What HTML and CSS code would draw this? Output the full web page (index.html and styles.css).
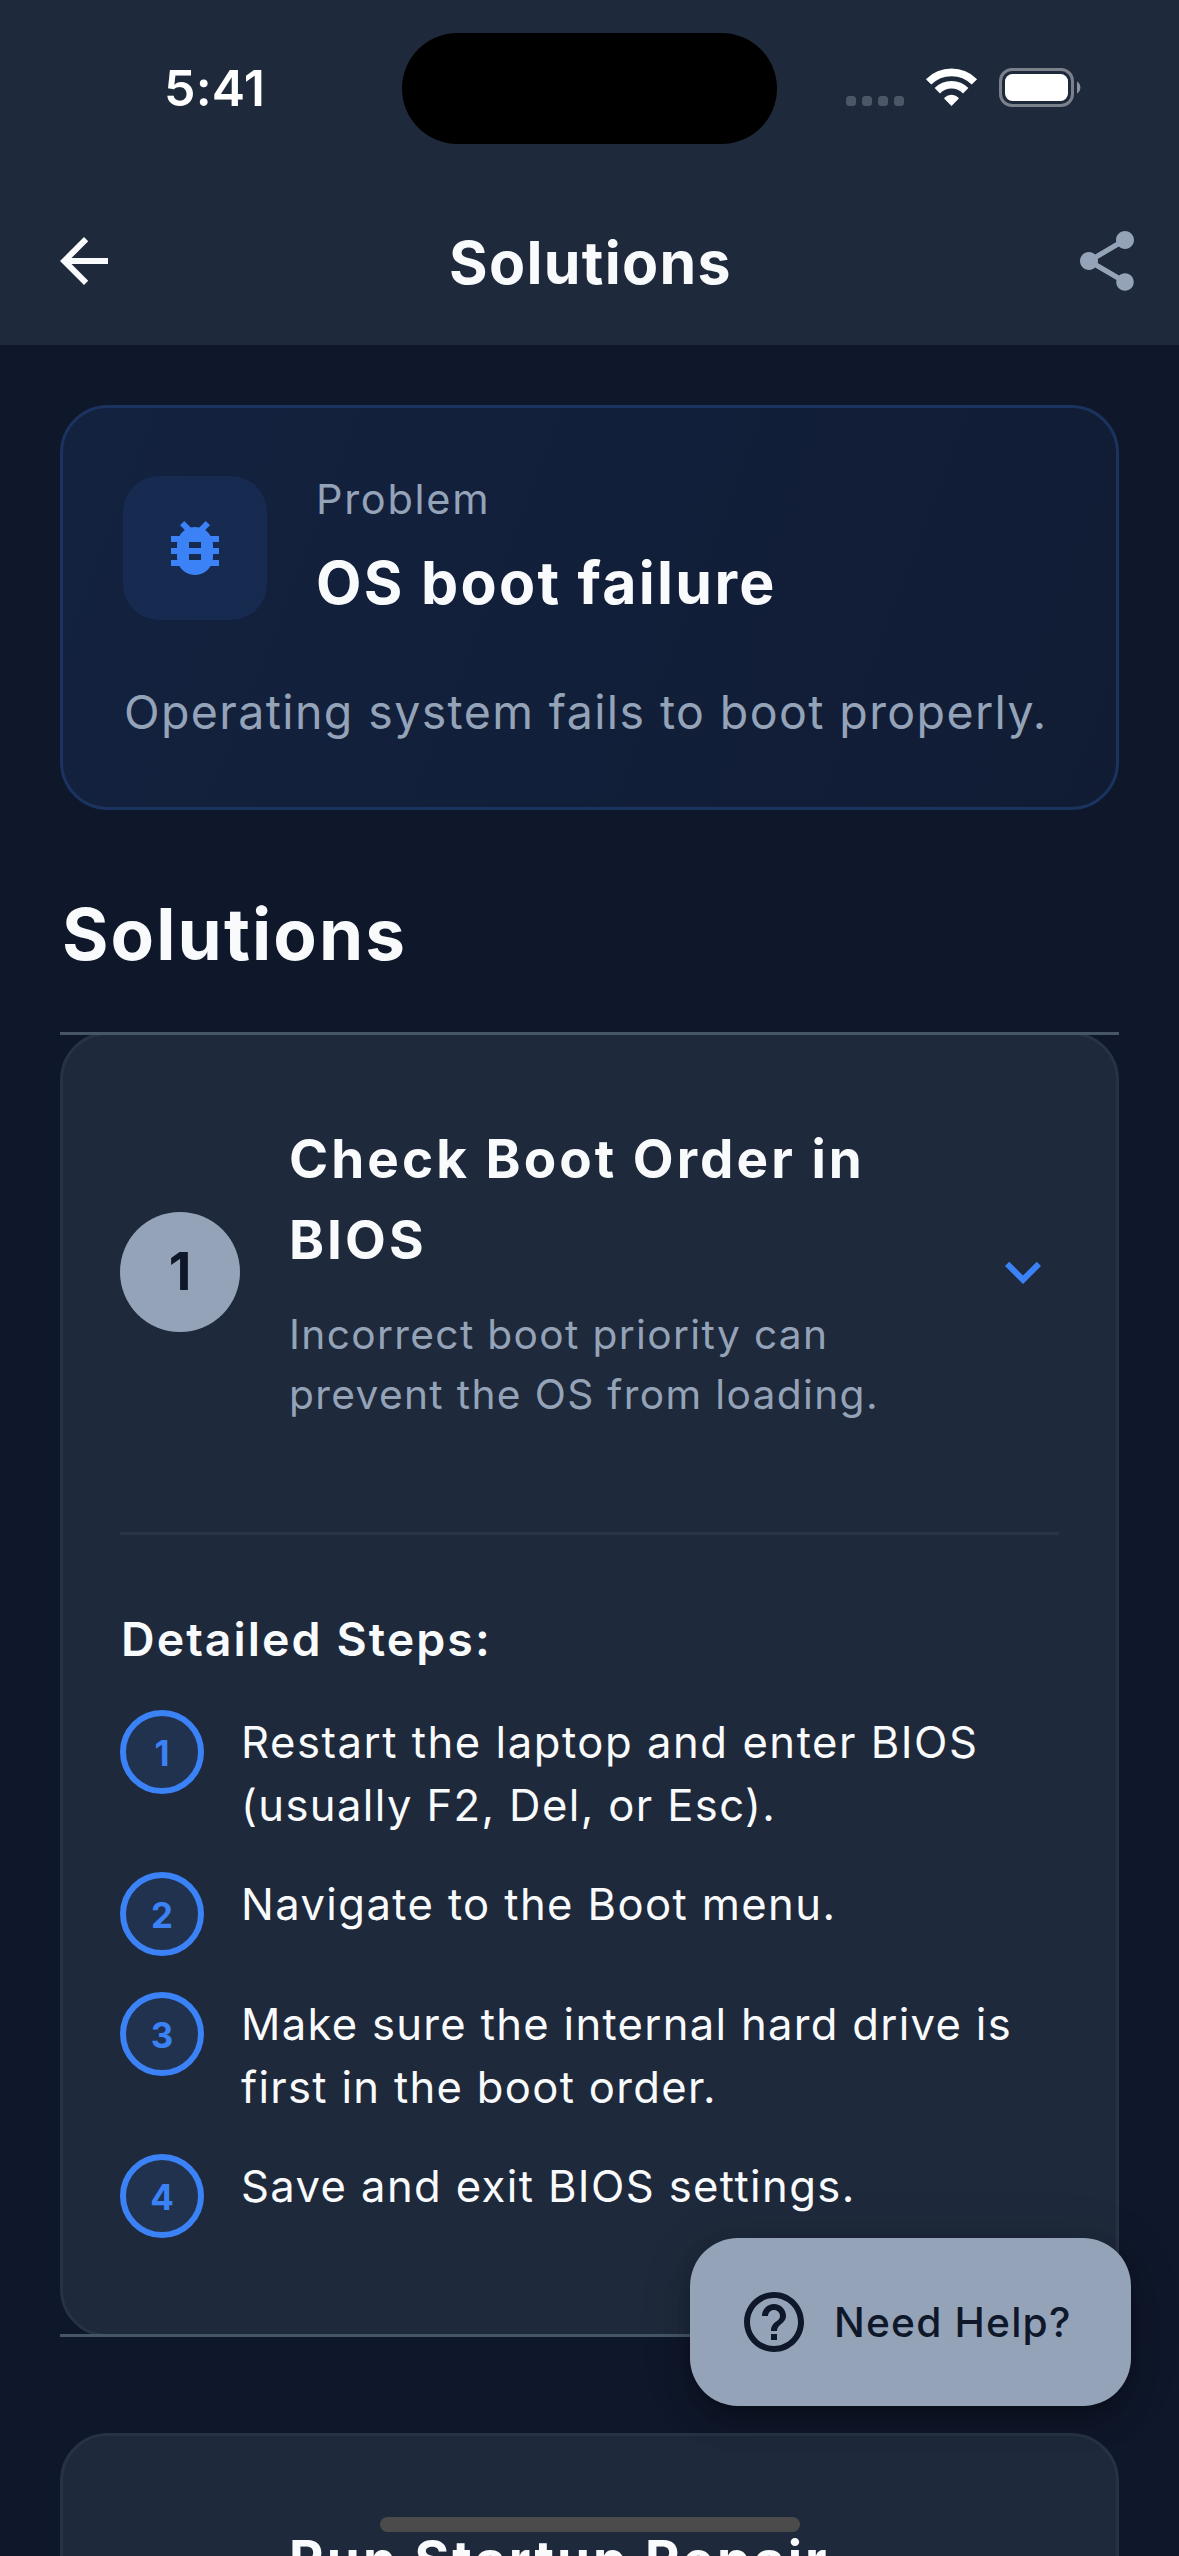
FILE: index.html
```html
<!DOCTYPE html>
<html lang="en">
<head>
<meta charset="utf-8">
<title>Solutions</title>
<link rel="stylesheet" href="styles.css">
</head>
<body>
<div class="screen">
  <header class="top">
    <div class="status">
      <span class="time">5:41</span>
      <span class="island"></span>
      <svg class="signals" width="235" height="39" viewBox="0 0 235 39">
        <g fill="#4c5666">
          <rect x="0" y="28" width="10" height="10" rx="3.5"/>
          <rect x="16" y="28" width="10" height="10" rx="3.5"/>
          <rect x="32" y="28" width="10" height="10" rx="3.5"/>
          <rect x="48" y="28" width="10" height="10" rx="3.5"/>
        </g>
        <g fill="none" stroke="#fff" stroke-width="7.6">
          <path d="M82.6 13.9A32.4 32.4 0 0 1 128.4 13.9"/>
          <path d="M91.3 22.7A20 20 0 0 1 119.7 22.7"/>
        </g>
        <path fill="#fff" d="M105.5 38 98.6 31.1Q97.8 30.3 98.7 29.4A9.8 9.8 0 0 1 112.3 29.4Q113.2 30.3 112.4 31.1Z"/>
        <rect x="154.500" y="1.500" width="72" height="36" rx="11.500" fill="none" stroke="#7a818b" stroke-width="3"/>
        <rect x="159" y="6" width="63" height="27" rx="7.500" fill="#fff"/>
        <path fill="#8e949d" d="M231 13.500A7 7 0 0 1 231 25.500Z"/>
      </svg>
    </div>
    <div class="appbar">
      <svg class="icon back" viewBox="0 0 24 24"><path d="M20 11H7.830l5.590-5.590L12 4l-8 8 8 8 1.410-1.410L7.830 13H20v-2z"/></svg>
      <h1 class="title">Solutions</h1>
      <svg class="icon share" viewBox="0 0 24 24"><path d="M18 16.080c-.76 0-1.440.3-1.960.77L8.910 12.700c.05-.23.09-.46.09-.7s-.04-.47-.09-.7l7.050-4.110c.54.5 1.250.81 2.040.81 1.660 0 3-1.340 3-3s-1.340-3-3-3-3 1.340-3 3c0 .24.04.47.09.7L8.040 9.810C7.500 9.310 6.790 9 6 9c-1.660 0-3 1.340-3 3s1.340 3 3 3c.79 0 1.500-.31 2.040-.81l7.120 4.160c-.05.21-.08.43-.08.65 0 1.610 1.310 2.920 2.920 2.920s2.920-1.310 2.920-2.920-1.310-2.920-2.920-2.920z"/></svg>
    </div>
  </header>

  <main class="content">
    <section class="problem">
      <div class="problem-row">
        <span class="bug-box">
          <svg class="icon" viewBox="0 0 24 24"><path d="M20 8h-2.810c-.45-.78-1.070-1.450-1.820-1.960L17 4.410 15.590 3l-2.170 2.170C12.960 5.060 12.490 5 12 5s-.96.06-1.410.17L8.410 3 7 4.410l1.620 1.630C7.880 6.550 7.260 7.220 6.810 8H4v2h2.090c-.05.33-.09.66-.09 1v1H4v2h2v1c0 .34.04.67.09 1H4v2h2.810c1.040 1.790 2.970 3 5.190 3s4.150-1.210 5.190-3H20v-2h-2.090c.05-.33.09-.66.09-1v-1h2v-2h-2v-1c0-.34-.04-.67-.09-1H20V8zm-6 8h-4v-2h4v2zm0-4h-4v-2h4v2z"/></svg>
        </span>
        <div>
          <p class="problem-label">Problem</p>
          <h2 class="problem-name">OS boot failure</h2>
        </div>
      </div>
      <p class="problem-desc">Operating system fails to boot properly.</p>
    </section>

    <h2 class="section-title">Solutions</h2>

    <article class="card card-open">
      <div class="card-head">
        <span class="badge">1</span>
        <div class="card-text">
          <h3 class="card-title">Check Boot Order in<br>BIOS</h3>
          <p class="card-sub">Incorrect boot priority can<br>prevent the OS from loading.</p>
        </div>
        <svg class="icon chevron" viewBox="0 0 24 24"><path d="M7.410 8.590 12 13.170l4.590-4.580L18 10l-6 6-6-6z"/></svg>
      </div>
      <hr class="divider">
      <h4 class="steps-title">Detailed Steps:</h4>
      <ol class="steps">
        <li class="step"><span class="num">1</span><p><span class="wide">Restart the laptop and enter BIOS</span><br>(usually F2, Del, or Esc).</p></li>
        <li class="step"><span class="num">2</span><p>Navigate to the Boot menu.</p></li>
        <li class="step"><span class="num">3</span><p>Make sure the internal hard drive is<br>first in the boot order.</p></li>
        <li class="step"><span class="num">4</span><p>Save and exit BIOS settings.</p></li>
      </ol>
    </article>

    <article class="card card-next">
      <div class="card-text">
        <h3 class="card-title">Run Startup Repair</h3>
      </div>
    </article>
  </main>

  <button class="help" type="button">
    <svg class="icon" viewBox="0 0 24 24"><path d="M11 18h2v-2h-2v2zm1-16C6.480 2 2 6.480 2 12s4.480 10 10 10 10-4.480 10-10S17.520 2 12 2zm0 18c-4.410 0-8-3.590-8-8s3.590-8 8-8 8 3.590 8 8-3.590 8-8 8zm0-14c-2.210 0-4 1.790-4 4h2c0-1.100.9-2 2-2s2 .9 2 2c0 2-3 1.750-3 5h2c0-2.250 3-2.500 3-5 0-2.210-1.790-4-4-4z"/></svg>
    <span>Need Help?</span>
  </button>
  <span class="home-bar"></span>
</div>
</body>
</html>
```
FILE: styles.css
```css
* { box-sizing: border-box; margin: 0; padding: 0; }

body {
  background: #0f172a;
  color: #f8fafc;
  font-family: Inter, "Liberation Sans", sans-serif;
}

.screen {
  position: relative;
  width: 1179px;
  height: 2556px;
  overflow: hidden;
}

.icon {
  width: 72px;
  height: 72px;
  flex: none;
  fill: currentColor;
}

/* Status bar and app bar */
.top { height: 345px; background: #1e293b; }

.status {
  display: grid;
  grid-template-columns: 402px 375px 402px;
  align-items: center;
  height: 177px;
}
.time {
  padding-left: 164px;
  margin-bottom: 1px;
  color: #fff;
  font-size: 50px;
  font-weight: 600;
  line-height: 60px;
  letter-spacing: 0.2px;
}
.island { height: 111px; border-radius: 56px; background: #000; }
.signals { justify-self: end; margin: 0 98px 2px 0; }

.appbar {
  display: grid;
  grid-template-columns: 1fr auto 1fr;
  align-items: center;
  height: 168px;
  padding: 0 36px 0 48px;
}
.title {
  padding: 3px 0 0;
  margin-left: -10px;
  font-size: 59px;
  font-weight: 660;
  line-height: 72px;
  letter-spacing: 1.3px;
}
.share { justify-self: end; color: #94a3b8; }

.content { padding: 60px 60px 0; }

/* Problem summary */
.problem {
  height: 405px;
  padding: 60px;
  border: 3px solid #1b335f;
  border-radius: 48px;
  background: linear-gradient(111deg, #13223f, #111c34) border-box;
}
.problem-row {
  display: flex;
  align-items: center;
  gap: 49px;
  height: 159px;
}
.bug-box {
  display: flex;
  align-items: center;
  justify-content: center;
  width: 144px;
  height: 144px;
  border-radius: 36px;
  background: rgba(59, 130, 246, 0.1);
  color: #3b82f6;
}
.problem-label {
  color: #94a3b8;
  font-size: 41.5px;
  line-height: 60px;
  letter-spacing: 1.7px;
}
.problem-name {
  margin-top: 9px;
  font-size: 59px;
  font-weight: 660;
  line-height: 89px;
  letter-spacing: 2.3px;
}
.problem-desc {
  margin-top: 48px;
  padding-left: 1px;
  color: #94a3b8;
  font-size: 46.5px;
  line-height: 74px;
  letter-spacing: 1.39px;
  white-space: nowrap;
}

.section-title {
  margin: 74px 0 48px 2px;
  font-size: 71px;
  font-weight: 660;
  line-height: 100px;
  letter-spacing: 2.1px;
}

/* Solution cards */
.card {
  position: relative;
  border: 3px solid #273345;
  border-radius: 48px;
  background: #1e293b;
  padding: 84px 57px 0;
}
.card-open { height: 1305px; }
.card-next { height: 500px; margin-top: 96px; padding: 84px 177px 0; }

/* Expansion rules run square over the rounded corners */
.card-open::before,
.card-open::after {
  content: "";
  position: absolute;
  left: -3px;
  right: -3px;
  height: 3px;
  background: #475569;
}
.card-open::before { top: -3px; }
.card-open::after { bottom: -3px; }

.card-head { display: flex; align-items: center; }
.badge {
  display: flex;
  align-items: center;
  justify-content: center;
  width: 120px;
  height: 120px;
  padding-bottom: 2px;
  border-radius: 50%;
  background: #94a3b8;
  color: #0f172a;
  font-size: 52.3px;
  font-weight: 700;
}
.card-text { flex: 1; padding-left: 49px; }
.card-title {
  font-size: 53px;
  font-weight: 660;
  line-height: 81px;
  letter-spacing: 3.05px;
}
.card-sub {
  margin-top: 24px;
  color: #94a3b8;
  font-size: 40.7px;
  line-height: 60px;
  letter-spacing: 1.34px;
}
.chevron { color: #3b82f6; }

.divider {
  height: 3px;
  margin-top: 107px;
  border: 0;
  background: #293547;
}
.steps-title {
  margin: 68px 0 35px 1px;
  font-size: 46.5px;
  font-weight: 560;
  line-height: 72px;
  letter-spacing: 2.05px;
}
.steps {
  display: flex;
  flex-direction: column;
  gap: 36px;
  list-style: none;
}
.step {
  display: flex;
  align-items: flex-start;
  gap: 37px;
  font-size: 43.6px;
  line-height: 63px;
  letter-spacing: 1.38px;
}
.step:nth-child(3) { letter-spacing: 1.3px; }
.step p { margin: 1px 0 -1px; white-space: nowrap; }
.wide { letter-spacing: 1.54px; }
.num {
  display: flex;
  align-items: center;
  justify-content: center;
  width: 84px;
  height: 84px;
  padding-top: 2px;
  border: 6px solid #3b82f6;
  border-radius: 50%;
  background: #21324e;
  color: #3b82f6;
  font-size: 34.9px;
  font-weight: 700;
  letter-spacing: 0;
}

/* Floating help button */
.help {
  position: absolute;
  top: 2238px;
  right: 48px;
  display: flex;
  align-items: center;
  gap: 24px;
  width: 441px;
  height: 168px;
  padding-left: 48px;
  border: 0;
  border-radius: 48px;
  background: #94a3b8;
  box-shadow: 0 9px 15px -3px rgba(0, 0, 0, 0.2),
              0 18px 30px rgba(0, 0, 0, 0.14),
              0 3px 54px rgba(0, 0, 0, 0.12);
  color: #0f172a;
  font-family: inherit;
  font-size: 40.7px;
  font-weight: 500;
  letter-spacing: 1.2px;
  white-space: nowrap;
}

.home-bar {
  position: absolute;
  left: 380px;
  top: 2517px;
  width: 420px;
  height: 15px;
  border-radius: 8px;
  background: #4b4b4b;
}
```
